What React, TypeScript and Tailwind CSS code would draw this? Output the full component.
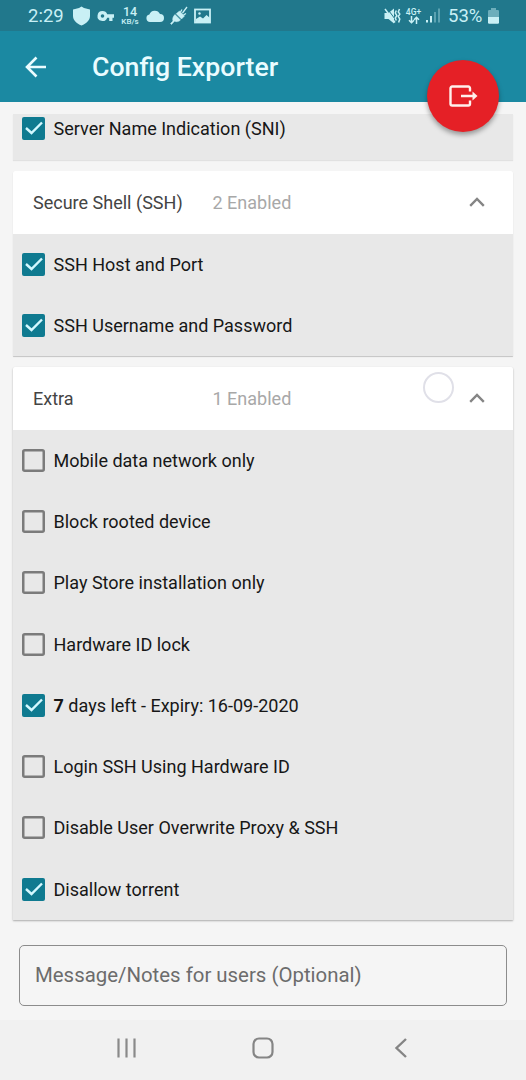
import { useState } from 'react';

interface Option {
  id: string;
  label: string;
  prefix?: string;
  checked: boolean;
}

const sniOptions: Option[] = [
  { id: 'sni', label: 'Server Name Indication (SNI)', checked: true },
];

const sshOptions: Option[] = [
  { id: 'ssh-host', label: 'SSH Host and Port', checked: true },
  { id: 'ssh-user', label: 'SSH Username and Password', checked: true },
];

const extraOptions: Option[] = [
  { id: 'mobile', label: 'Mobile data network only', checked: false },
  { id: 'rooted', label: 'Block rooted device', checked: false },
  { id: 'play', label: 'Play Store installation only', checked: false },
  { id: 'hwid', label: 'Hardware ID lock', checked: false },
  { id: 'expiry', prefix: '7', label: ' days left - Expiry: 16-09-2020', checked: true },
  { id: 'login', label: 'Login SSH Using Hardware ID', checked: false },
  { id: 'overwrite', label: 'Disable User Overwrite Proxy & SSH', checked: false },
  { id: 'torrent', label: 'Disallow torrent', checked: true },
];

function StatusBar() {
  return (
    <div className="flex h-[31px] shrink-0 items-center bg-[#21788c] pr-[27px] pl-[28px] text-[#c9f0f5]">
      <span className="w-[44px] pt-[2px] text-[18.5px] leading-none">2:29</span>
      {/* shield */}
      <svg className="h-5 w-[19px]" viewBox="0 0 19 20" fill="#c9f0f5">
        <path d="M9.500 0.500 12 2l6 1.500V10c0 4-3.500 7.500-8.500 9.500C4.500 17.500 1 14 1 10V3.500L7 2z" />
      </svg>
      {/* vpn key */}
      <svg className="ml-[6px] h-4 w-[18px]" viewBox="0 0 18 16" fill="#c9f0f5">
        <path
          fillRule="evenodd"
          d="M5.500 3a5 5 0 0 1 4.700 3.300H17v3.400h-1.500V13h-3.300V9.700h-2A5 5 0 1 1 5.500 3zm0 3.200a1.800 1.800 0 1 0 0 3.600 1.800 1.800 0 0 0 0-3.600z"
        />
      </svg>
      <div className="ml-[5px] flex w-[20px] flex-col items-center font-medium">
        <span className="text-[12.5px] leading-[12px]">14</span>
        <span className="text-[8px] leading-[7px]">KB/s</span>
      </div>
      {/* cloud */}
      <svg className="ml-[6px] h-[14px] w-[18px]" viewBox="0 0 18 14" fill="#c9f0f5">
        <path d="M4 13a3.800 3.800 0 0 1-.6-7.500A5.700 5.700 0 0 1 14 5a4 4 0 0 1 0 8z" />
      </svg>
      {/* plug */}
      <svg className="ml-[6px] h-5 w-[18px]" viewBox="0 0 18 20" fill="#c9f0f5" stroke="#c9f0f5">
        <path
          d="M5 8.500 10.500 14c-2 2-4.500 2-6 1.200L1.500 18.500l-1-1L3 15C2.200 13 3 10.500 5 8.500zM9.500 5 14.500 10 11.500 13 6.200 7.700z"
          strokeWidth="0.500"
        />
        <path d="M12.500 7 17 1M10.500 6 12 3.500M13.500 9 16 7.500" strokeWidth="1.300" fill="none" />
      </svg>
      {/* picture */}
      <svg className="ml-[6px] h-4 w-[17px]" viewBox="0 0 17 16" fill="none" stroke="#c9f0f5">
        <rect x="1" y="1.500" width="15" height="13" strokeWidth="1.800" />
        <path d="M2 11 6 8.500l3 2L12.500 7 16 10v4H2z" fill="#c9f0f5" stroke="none" />
        <circle cx="5.500" cy="5.500" r="1.200" fill="#c9f0f5" stroke="none" />
      </svg>

      <div className="ml-auto flex items-center">
        {/* muted, vibrating */}
        <svg className="h-4 w-[17px]" viewBox="0 0 17 16" fill="#c9f0f5">
          <path d="M0.500 5h4L10 0.500v15L4.500 11h-4z" />
          <path d="M2.800 0 11 11" stroke="#21788c" strokeWidth="1" />
          <path
            d="M1 1 11 14.500M12.300 2.500l-1 2.500 1.500 2.500-1.500 2.500 1 2.500M15.500 1l-1.200 3 1.500 2-1.500 2.500 1.500 2.500-1.200 3.500"
            fill="none"
            stroke="#c9f0f5"
            strokeWidth="1.500"
          />
        </svg>
        <div className="ml-[4px] flex w-[17px] flex-col items-center">
          <span className="text-[8.5px] leading-[8px] font-medium">4G+</span>
          <svg className="h-[8px] w-[12px]" viewBox="0 0 12 8" fill="none" stroke="#c9f0f5" strokeWidth="1.500">
            <path d="M3.500 0v6.500M1 4.300l2.500 2.500L6 4.300M8.500 8V1.500M6 3.700l2.500-2.500L11 3.700" />
          </svg>
        </div>
        {/* signal */}
        <svg className="ml-[4px] h-[15px] w-[14px]" viewBox="0 0 14 15" fill="#c9f0f5">
          <rect x="0" y="12" width="2" height="2.500" />
          <rect x="4" y="8" width="2" height="6.500" />
          <rect x="8" y="4" width="2" height="10.500" opacity="0.350" />
          <rect x="12" y="0.500" width="2" height="14" opacity="0.350" />
        </svg>
        <span className="ml-[8px] w-[36px] pt-[2px] text-[18.5px] leading-none">53%</span>
        {/* battery */}
        <svg className="ml-[4px] h-4 w-[11px]" viewBox="0 0 11 16" fill="#c9f0f5">
          <path d="M3 0h5v2h1.800A1.200 1.200 0 0 1 11 3.200V9H0V3.200A1.200 1.200 0 0 1 1.200 2H3z" opacity="0.450" />
          <path d="M0 9h11v5.500a1.200 1.200 0 0 1-1.200 1.200H1.200A1.200 1.200 0 0 1 0 14.500z" />
        </svg>
      </div>
    </div>
  );
}

function AppBar() {
  return (
    <header className="relative z-10 flex h-[71px] shrink-0 items-center bg-[#1b89a2] pl-[25px] text-[#eafcff]">
      <button aria-label="Back">
        <svg className="h-[22px] w-[22px]" viewBox="0 0 22 22" fill="none" stroke="currentColor" strokeWidth="2.600">
          <path d="M11.500 1.500 2 11l9.500 9.500M2 11h19" />
        </svg>
      </button>
      <h1 className="ml-[45px] pt-[2px] text-[26.7px] font-medium whitespace-nowrap">Config Exporter</h1>
      {/* Floating export button, hangs over the list */}
      <button
        aria-label="Export"
        className="absolute top-[29px] right-[27px] flex h-[72px] w-[72px] items-center justify-center rounded-full bg-[#e52026] shadow-[0_3px_5px_rgba(0,0,0,0.35)]"
      >
        <svg className="h-[22px] w-[29px]" viewBox="0 0 29 22" fill="none" stroke="#fff0ec" strokeWidth="2.400">
          <path d="M21 6.500V3.200a1.700 1.700 0 0 0-1.700-1.700H3.200A1.700 1.700 0 0 0 1.500 3.200v15.600a1.700 1.700 0 0 0 1.700 1.700h16.100a1.700 1.700 0 0 0 1.700-1.700V15.500M12 11h12" />
          <path d="M23.500 6.500 28.500 11 23.500 15.500z" fill="#fff0ec" stroke="none" />
        </svg>
      </button>
    </header>
  );
}

function OptionRow({ option, onToggle }: { option: Option; onToggle: () => void }) {
  return (
    <button
      role="checkbox"
      aria-checked={option.checked}
      onClick={onToggle}
      className="flex h-[61.3px] w-full shrink-0 items-center pl-[9px] text-left"
    >
      {option.checked ? (
        <span className="flex h-[23px] w-[23px] items-center justify-center rounded-[2px] bg-[#0f7a90]">
          <svg className="h-[14px] w-[18px]" viewBox="0 0 18 14" fill="none" stroke="#d3f8ff" strokeWidth="2.400">
            <path d="M1 7 6.500 12 17 1.500" />
          </svg>
        </span>
      ) : (
        <svg className="h-[23px] w-[23px]" viewBox="0 0 23 23" fill="none" stroke="#7b7b7b" strokeWidth="2.500">
          <rect x="1.250" y="1.250" width="20.500" height="20.500" rx="1.500" />
        </svg>
      )}
      <span className="ml-[8.5px] text-[18.030px] whitespace-pre text-[#171717]">
        {option.prefix && <b>{option.prefix}</b>}
        {option.label}
      </span>
    </button>
  );
}

function OptionList({ initial }: { initial: Option[] }) {
  const [options, setOptions] = useState(initial);

  function toggle(id: string) {
    setOptions(options.map((o) => (o.id === id ? { ...o, checked: !o.checked } : o)));
  }

  return (
    <>
      {options.map((option) => (
        <OptionRow key={option.id} option={option} onToggle={() => toggle(option.id)} />
      ))}
    </>
  );
}

function SectionHeader({ title, status }: { title: string; status: string }) {
  return (
    <div className="flex h-[62.5px] shrink-0 items-center rounded-t-[2px] bg-white pr-[28px] pl-[20px] text-[18.030px]">
      <span className="w-[179.5px] pt-px text-[#444444]">{title}</span>
      <span className="pt-px text-[#a8a8a8]">{status}</span>
      <svg className="mb-px ml-auto h-[10px] w-4" viewBox="0 0 16 10" fill="none" stroke="#858585" strokeWidth="2.400">
        <path d="M1.200 8.800 8 2l6.800 6.800" />
      </svg>
    </div>
  );
}

function NavBar() {
  return (
    <nav className="flex h-[60px] shrink-0 items-center bg-[#f1f1f1] pb-[4px] pl-[116px]">
      <svg className="h-5 w-[21px]" viewBox="0 0 21 20" fill="none" stroke="#8a8a8a" strokeWidth="2.200">
        <path d="M2.500 0.500v19M10.500 0.500v19M18.500 0.500v19" />
      </svg>
      <svg className="ml-[115px] h-[22px] w-[22px]" viewBox="0 0 22 22" fill="none" stroke="#858585" strokeWidth="2.200">
        <rect x="1.500" y="1.500" width="19" height="19" rx="5.500" />
      </svg>
      <svg className="ml-[120px] h-5 w-[14px]" viewBox="0 0 14 20" fill="none" stroke="#858585" strokeWidth="2.400">
        <path d="M12 1 2.500 10l9.500 9" />
      </svg>
    </nav>
  );
}

export default function App() {
  return (
    <div className="flex h-[1080px] w-[526px] flex-col overflow-hidden bg-[#f5f5f5] font-[Roboto,sans-serif]">
      <StatusBar />
      <AppBar />

      <main className="flex flex-1 flex-col px-[13px] pt-[12px]">
        {/* Previous section, scrolled partly under the app bar */}
        <section className="flex h-[46px] shrink-0 flex-col justify-end overflow-hidden bg-[#e8e8e8] pb-px shadow-[0_1px_1px_rgba(0,0,0,0.08)]">
          <OptionList initial={sniOptions} />
        </section>

        <section className="mt-[11px] h-[185px] shrink-0 rounded-t-[2px] bg-[#e8e8e8] shadow-[0_1px_1px_rgba(0,0,0,0.2)]">
          <SectionHeader title="Secure Shell (SSH)" status="2 Enabled" />
          <OptionList initial={sshOptions} />
        </section>

        <section className="relative mt-[11px] h-[553px] shrink-0 rounded-t-[2px] bg-[#e8e8e8] shadow-[0_1px_2px_rgba(0,0,0,0.3)]">
          <SectionHeader title="Extra" status="1 Enabled" />
          <OptionList initial={extraOptions} />
          {/* touch indicator */}
          <span className="absolute top-[5px] left-[410px] h-[31px] w-[31px] rounded-full border-2 border-[#e0e0e8]" />
        </section>

        <input
          className="mx-[6px] mt-[25px] h-[61px] rounded-[5px] border-[1.5px] border-[#8c8c8c] px-[15px] pb-[2px] text-[20.4px] text-[#555555] outline-none placeholder:text-[#6c6c6c]"
          placeholder="Message/Notes for users (Optional)"
        />
      </main>

      <NavBar />
    </div>
  );
}
